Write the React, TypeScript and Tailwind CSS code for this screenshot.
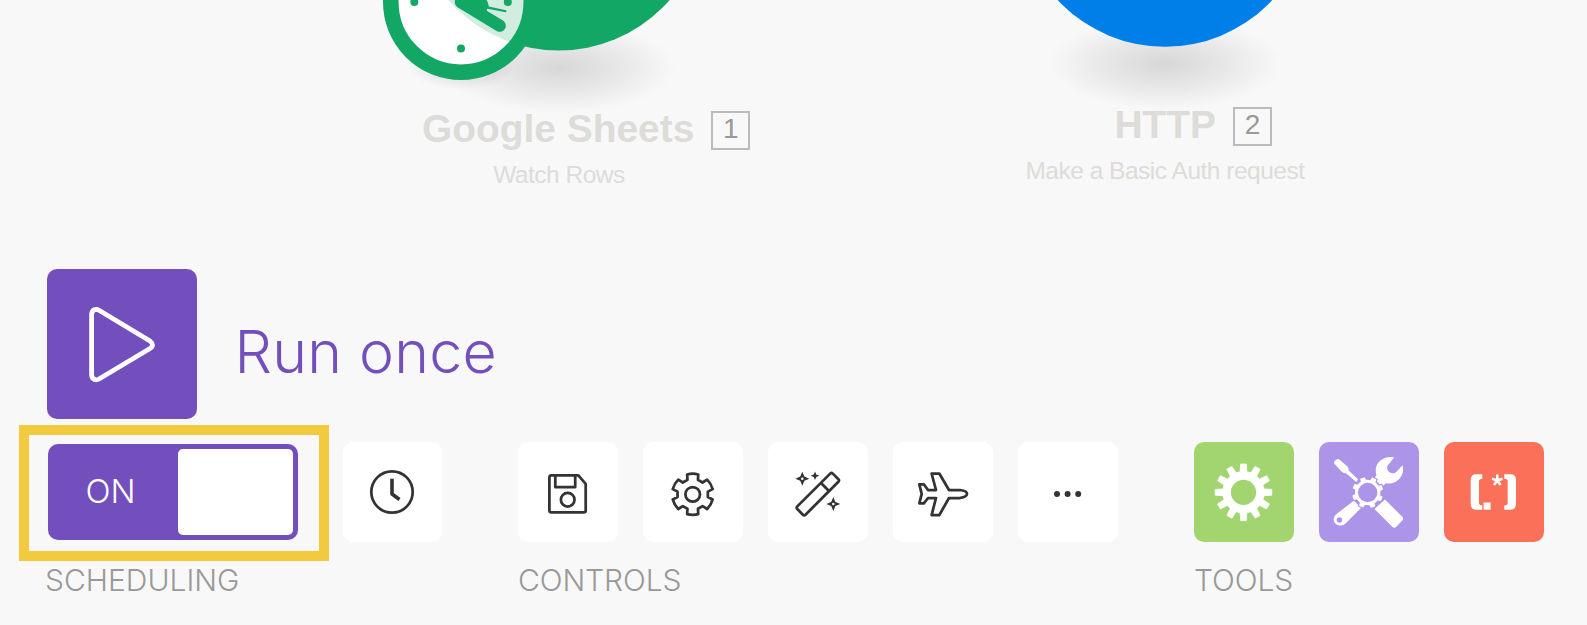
import type { ReactNode } from "react";

const point = (radius: number, degrees: number, cx: number, cy: number) => {
  const a = (degrees * Math.PI) / 180;
  return `${(cx + radius * Math.sin(a)).toFixed(2)} ${(cy - radius * Math.cos(a)).toFixed(2)}`;
};

/** Closed gear outline; tip and root are half-widths of a tooth in degrees. */
function gearPath(cx: number, cy: number, teeth: number, outer: number, inner: number, tip: number, root: number, turn = 0) {
  const parts: string[] = [];
  for (let i = 0; i < teeth; i++) {
    const a = (360 / teeth) * i + turn;
    parts.push(`${i === 0 ? "M" : "L"}${point(inner, a - root, cx, cy)}`);
    parts.push(`L${point(outer, a - tip, cx, cy)}`);
    parts.push(`A${outer} ${outer} 0 0 1 ${point(outer, a + tip, cx, cy)}`);
    parts.push(`L${point(inner, a + root, cx, cy)}`);
  }
  return parts.join("") + "Z";
}

function Canvas() {
  return (
    <svg className="absolute inset-0" width="1587" height="269" viewBox="0 0 1587 269">
      <defs>
        <radialGradient id="shadow">
          <stop offset="0" stopColor="#000" stopOpacity="0.135" />
          <stop offset="0.5" stopColor="#000" stopOpacity="0.07" />
          <stop offset="1" stopColor="#000" stopOpacity="0" />
        </radialGradient>
        <clipPath id="clockFace">
          <circle cx="461" cy="2" r="62.5" />
        </clipPath>
      </defs>
      <ellipse cx="559" cy="67.5" rx="117" ry="46" fill="url(#shadow)" />
      <ellipse cx="461" cy="67" rx="54" ry="23" fill="url(#shadow)" />
      <circle cx="559" cy="-96" r="146.5" fill="#12a765" />
      <circle cx="461" cy="2" r="70" fill="#fff" />
      <g clipPath="url(#clockFace)">
        <circle cx="559" cy="-96" r="146.5" fill="#d0ede0" />
      </g>
      <circle cx="461" cy="2" r="70.2" fill="none" stroke="#12a765" strokeWidth="15.6" />
      <g fill="#12a765">
        <circle cx="414.3" cy="2" r="4" />
        <circle cx="507.8" cy="2" r="4" />
        <circle cx="461" cy="48.6" r="4" />
        <path d="M455 -4L454.8 3Q455 5.5 457.5 7.2L497 31.2C504.5 34 509 25 503 20.5L487.5 11.3Q486 9.5 487.5 8.8L505.7 12.3Q507.2 11.2 506 10.2L488.8 6.5Q488.5 1 483 -4Z" />
      </g>
      <ellipse cx="1165" cy="63.5" rx="117" ry="46" fill="url(#shadow)" />
      <circle cx="1165" cy="-99.7" r="146.5" fill="#007fe8" />
    </svg>
  );
}

function NodeLabel({ place, badgePlace, name, action, index }: { place: string; badgePlace: string; name: string; action: string; index: number }) {
  return (
    <div className={`absolute w-[400px] text-center font-['Liberation_Sans',sans-serif] text-[#dddcd8] ${place}`}>
      <div className={`flex h-[44px] items-start ${badgePlace}`}>
        <span className="-mt-1 text-[38.9px] leading-[44px] font-bold whitespace-nowrap">{name}</span>
        <span className="ml-[17px] h-[39px] w-[39px] shrink-0 border-2 border-[#bbb] text-[28px] leading-8 text-[#999]">
          {index}
        </span>
      </div>
      <div className="mt-1.5 text-[24.5px] leading-7 tracking-[-0.49px]">{action}</div>
    </div>
  );
}

function Tile({ className = "w-[100px] bg-white", children }: { className?: string; children: ReactNode }) {
  return (
    <button className={`h-[100px] shrink-0 overflow-hidden rounded-[10px] ${className}`}>
      <svg width="100" height="100" viewBox="0 0 100 100" fill="none" stroke="#333" strokeWidth="2.75" strokeLinejoin="round">
        {children}
      </svg>
    </button>
  );
}

function Label({ className = "", children }: { className?: string; children: ReactNode }) {
  return <div className={`mt-5 text-[30px] leading-9 font-light text-[#999] ${className}`}>{children}</div>;
}

const star = (x: number, y: number, r: number) => {
  const k = r * 0.3;
  return `M${x} ${y - r}L${x + k} ${y - k}L${x + r} ${y}L${x + k} ${y + k}L${x} ${y + r}L${x - k} ${y + k}L${x - r} ${y}L${x - k} ${y - k}Z`;
};

export default function App() {
  return (
    <main className="relative flex h-[625px] w-[1587px] flex-col overflow-hidden bg-[#f8f8f8] font-['Inter',sans-serif]">
      <section className="relative h-[269px] shrink-0">
        <Canvas />
        <NodeLabel place="left-[359px] top-[111px]" badgePlace="ml-[63px]" name="Google Sheets" action="Watch Rows" index={1} />
        <NodeLabel place="left-[965px] top-[107px]" badgePlace="ml-[149.5px]" name="HTTP" action="Make a Basic Auth request" index={2} />
      </section>

      <section className="ml-[47px] flex h-[150px] shrink-0">
        <button className="h-[150px] w-[150px] rounded-[10px] bg-[#734fbe]">
          <svg width="150" height="150" viewBox="0 0 150 150" fill="none" stroke="#fff" strokeWidth="4.8" strokeLinejoin="round">
            <path d="M44.6 45V106Q45 110.5 49 110.8Q50.5 110.8 52 110L103 79.5Q108 76 103 72L52 41.3Q50.5 40.3 49 40.3Q45 40.6 44.6 45Z" />
          </svg>
        </button>
        <span className="mt-[47px] ml-[37.5px] text-[59px] leading-[72px] font-light tracking-[0.25px] text-[#734fbe]">Run once</span>
      </section>

      <section className="mt-[23px] flex">
        <div className="ml-[47px] w-[471px]">
          <div className="flex h-[100px] items-center">
            <button className="ml-px flex h-24 w-[250px] items-center justify-between rounded-[10px] bg-[#734fbe] p-[5px]">
              <span className="mb-0.5 ml-[32.5px] text-[33px] leading-10 font-light text-white">ON</span>
              <span className="h-[86px] w-[115px] rounded-[5px] bg-white" />
            </button>
            <Tile className="ml-[45px] w-[99px] bg-white">
              <circle cx="49" cy="50" r="20.7" />
              <path d="M49 36.8V52L56.5 57.5" strokeWidth="3.6" />
            </Tile>
          </div>
          <Label className="-ml-0.5">SCHEDULING</Label>
        </div>

        <div className="w-[676px]">
          <div className="flex gap-[25px]">
            <Tile>
              <path d="M33.5 33.4H60.3L67.7 41.8V68.5Q67.7 70.4 65.7 70.4H33.5Q31.4 70.4 31.4 68.5V35.5Q31.4 33.4 33.5 33.4Z" />
              <path d="M37.3 33.3V45.2H57.2V33.3" />
              <circle cx="49.7" cy="57.7" r="6.8" />
            </Tile>
            <Tile>
              <path d={gearPath(49.7, 52.3, 6, 20.6, 15.4, 15.5, 20)} />
              <circle cx="49.7" cy="52.3" r="7.3" />
            </Tile>
            <Tile>
              <path d="M62.2 31.6Q63.5 30.3 64.8 31.6L70.4 37.2Q71.6 38.5 70.4 39.8L37.5 72.7Q36.2 74 34.9 72.7L29.3 67Q28.1 65.7 29.3 64.4ZM53 41L61.2 49.2" />
              <g fill="#333" stroke="none">
                <path d={star(34.3, 36.7, 7)} />
                <path d={star(47, 33.7, 4.3)} />
                <path d={star(65.3, 62, 7)} />
                <circle cx="34.3" cy="36.7" r="1.3" fill="#fff" />
                <circle cx="65.3" cy="62" r="1.3" fill="#fff" />
              </g>
            </Tile>
            <Tile>
              <path d="M38.6 31.5H46.3L56 48H67Q74 49 74 51.8Q74 55 67 56H56L46.3 73.1H38.6L43 56H35L30.8 61.3H26.3L28.7 51.8L26.3 42.3H30.8L35 48H43Z" />
            </Tile>
            <Tile>
              <g fill="#333" stroke="none">
                <circle cx="39" cy="52" r="3" />
                <circle cx="49.6" cy="52" r="3" />
                <circle cx="60.2" cy="52" r="3" />
              </g>
            </Tile>
          </div>
          <Label className="tracking-[-0.1px]">CONTROLS</Label>
        </div>

        <div>
          <div className="flex gap-[25px]">
            <Tile className="w-[100px] bg-[#a2d56f]">
              <path d={gearPath(49.5, 50.3, 12, 28.4, 20.8, 5.8, 9.2)} fill="#fff" stroke="#fff" strokeWidth="0.8" />
              <circle cx="49.5" cy="50.3" r="12.6" fill="#a2d56f" stroke="none" />
            </Tile>
            <Tile className="w-[100px] bg-[#ac95e9]">
              <g fill="#fff" stroke="none">
                <path d="M15.2 21.5Q14.6 20.3 15.8 18.8L18 17.2Q19.2 16.8 20.3 17.6L28.5 24.5Q29.8 26 29.7 28.5L39.2 37.5L37.3 40L27 31.3Q24 31 22.5 29.5Z" />
                <path d="M75.2 15.4C65.5 13.5 57 19.5 56.7 28Q56.7 31 57.5 33.5L53.5 37L62.5 45L67 41.2C77 43.5 86.5 34 83.5 23.3L77 30.2Q74.5 32 71 30.5Q67.5 28.5 68.3 24Z" />
                <path d="M35 58.5L42 66L26.5 81.5C19 87.5 10.5 79 17 72.5Z" />
                <path d="M66 57.5L83.5 75Q84.7 77 83.3 78.5L77 85Q75.5 86.5 73.5 85L55.5 67Z" />
                <path d={gearPath(48.7, 50.5, 8, 16.4, 14, 11, 14, 25)} fill="#ac95e9" stroke="#ac95e9" strokeWidth="1" />
                <path d={gearPath(48.7, 50.5, 8, 15.6, 12.9, 9, 12, 25)} />
              </g>
              <circle cx="48.7" cy="50.5" r="9.7" fill="#ac95e9" stroke="none" />
              <circle cx="20.4" cy="78" r="2.7" fill="#ac95e9" stroke="none" />
            </Tile>
            <Tile className="w-[100px] bg-[#fb7059]">
              <g fill="#fff" stroke="none">
                <path d="M38.3 32.3H32Q26.7 32.3 26.7 38V62Q26.7 67.7 32 67.7H38.3V63.5Q35 63.5 35 60.5V39.5Q35 36.8 38.3 36.8Z" />
                <path d="M60.3 32.3H66.5Q72 32.3 72 38V62Q72 67.7 66.5 67.7H60.3V63.5Q63.7 63.5 63.7 60.5V39.5Q63.7 36.8 60.3 36.8Z" />
                <rect x="39.6" y="60.5" width="7" height="7.2" />
              </g>
              <path d="M53.3 38.5V32.6M53.3 38.5L58.5 36.8M53.3 38.5L56.6 43M53.3 38.5L50 43M53.3 38.5L48.1 36.8" stroke="#fff" strokeWidth="2.5" />
            </Tile>
          </div>
          <Label className="tracking-[-0.1px]">TOOLS</Label>
        </div>
      </section>

      <div className="absolute top-[424.5px] left-[19px] h-[136.5px] w-[310px] border-[10px] border-[#f3ca3e]" />
    </main>
  );
}
